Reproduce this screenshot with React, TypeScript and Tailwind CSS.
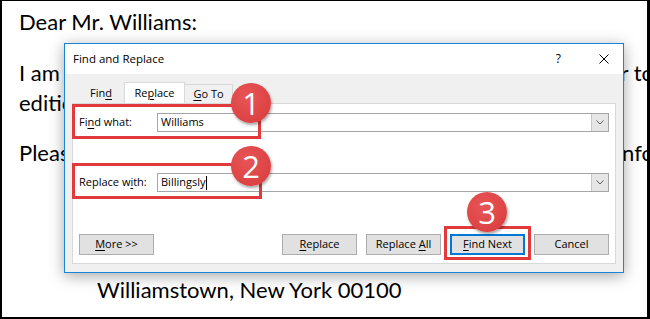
import React from "react";

const U = ({ children }: { children: React.ReactNode }) => (
  <span className="underline underline-offset-2">{children}</span>
);

const Badge = ({ n, className }: { n: string; className: string }) => (
  <div
    className={`absolute flex h-[40px] w-[40px] items-center justify-center rounded-full bg-[radial-gradient(circle_at_40%_35%,#e85556,#d73a3c)] text-[31px] leading-none text-white shadow-[1px_2px_3px_rgba(0,0,0,0.35)] ${className}`}
    style={{ fontFamily: "'Open Sans', sans-serif" }}
  >
    {n}
  </div>
);

const Btn = ({
  children,
  focused,
}: {
  children: React.ReactNode;
  focused?: boolean;
}) => (
  <div
    className={`flex h-[21px] w-[75px] items-center justify-center bg-[#e1e1e1] text-[11px] text-black ${
      focused ? "border-2 border-[#0078d7]" : "border border-[#adadad]"
    }`}
  >
    {children}
  </div>
);

const Combo = ({ value, caret }: { value: string; caret?: boolean }) => (
  <div className="flex h-[19px] flex-1 items-center border border-[#a5a5a5] bg-white">
    <div className="flex flex-1 items-center pl-[3px] text-[11px] text-black">
      {value}
      {caret && <span className="ml-[1px] inline-block h-[14px] w-px bg-black" />}
    </div>
    <div className="flex h-full w-[17px] items-center justify-center border-l border-[#c5c5c5] bg-[#e6e6e6]">
      <svg width="8" height="5" viewBox="0 0 8 5">
        <path d="M0.5 0.5 L4 4 L7.5 0.5" fill="none" stroke="#606060" strokeWidth="1" />
      </svg>
    </div>
  </div>
);

export default function App() {
  return (
    <div className="relative h-[319px] w-[650px] overflow-hidden border-t border-r-[3px] border-b-2 border-l-2 border-black bg-white">
      {/* document */}
      <div
        className="pl-[17px] pt-[6px] text-[22px] leading-[30px] text-black"
        style={{ fontFamily: "Lato, 'Liberation Sans', sans-serif" }}
      >
        <div>Dear Mr. Williams:</div>
        <div className="mt-[21px] flex justify-between">
          <span>I am</span>
          <span className="mr-[-7px]">r to</span>
        </div>
        <div>edition</div>
        <div className="mt-[20px] flex justify-between">
          <span>Please</span>
          <span className="mr-[-7px]">nfo</span>
        </div>
        <div className="mt-[107px] pl-[78px]">Williamstown, New York 00100</div>
      </div>

      {/* dialog */}
      <div
        className="absolute left-[62px] top-[42px] flex h-[230px] w-[560px] flex-col border border-[#1883d7] bg-[#f0f0f0] shadow-[0_3px_14px_rgba(0,0,0,0.35)]"
        style={{ fontFamily: "'Open Sans', 'Noto Sans', sans-serif" }}
      >
        <div className="flex h-[30px] items-center bg-white pl-[8px] pr-[14px] text-[11.5px] text-black">
          <span className="flex-1">Find and Replace</span>
          <span className="mr-[38px] text-[12px]">?</span>
          <svg width="10" height="10" viewBox="0 0 10 10">
            <path d="M0.5 0.5 L9.5 9.5 M9.5 0.5 L0.5 9.5" stroke="#000" strokeWidth="1" />
          </svg>
        </div>

        <div className="flex flex-1 flex-col px-[7px] pb-[8px] pt-[8px]">
          <div className="flex h-[21px] items-end pl-[6px] text-[11px] text-black">
            <div className="flex h-[19px] w-[46px] items-center justify-center">
              <span>Fin<U>d</U></span>
            </div>
            <div className="flex h-[21px] w-[61px] items-center justify-center border border-b-0 border-[#d9d9d9] bg-white">
              <span>Re<U>p</U>lace</span>
            </div>
            <div className="flex h-[19px] w-[48px] items-center justify-center border-t border-r border-[#d9d9d9]">
              <span><U>G</U>o To</span>
            </div>
          </div>

          <div className="flex flex-1 flex-col border border-[#d9d9d9] bg-white px-[6px] pb-[8px] pt-[9px] text-[11px] text-black">
            <div className="flex items-center">
              <span className="w-[78px]">Fi<U>n</U>d what:</span>
              <Combo value="Williams" />
            </div>
            <div className="mt-[41px] flex items-center">
              <span className="w-[78px]">Replace w<U>i</U>th:</span>
              <Combo value="Billingsly" caret />
            </div>
            <div className="mt-auto flex items-center justify-between">
              <Btn>
                <span><U>M</U>ore &gt;&gt;</span>
              </Btn>
              <div className="flex gap-[9px]">
                <Btn>
                  <span><U>R</U>eplace</span>
                </Btn>
                <Btn>
                  <span>Replace <U>A</U>ll</span>
                </Btn>
                <Btn focused>
                  <span><U>F</U>ind Next</span>
                </Btn>
                <Btn>Cancel</Btn>
              </div>
            </div>
          </div>
        </div>
      </div>

      {/* annotations */}
      <div className="absolute left-[70px] top-[103px] h-[35px] w-[189px] border-[3px] border-[#e2393d]" />
      <div className="absolute left-[70px] top-[162px] h-[36px] w-[190px] border-[3px] border-[#e2393d]" />
      <div className="absolute left-[442px] top-[225px] h-[34px] w-[87px] border-[3px] border-[#e2393d]" />
      <Badge n="1" className="left-[229px] top-[82px]" />
      <Badge n="2" className="left-[229px] top-[145px]" />
      <Badge n="3" className="left-[465px] top-[191px]" />
    </div>
  );
}
